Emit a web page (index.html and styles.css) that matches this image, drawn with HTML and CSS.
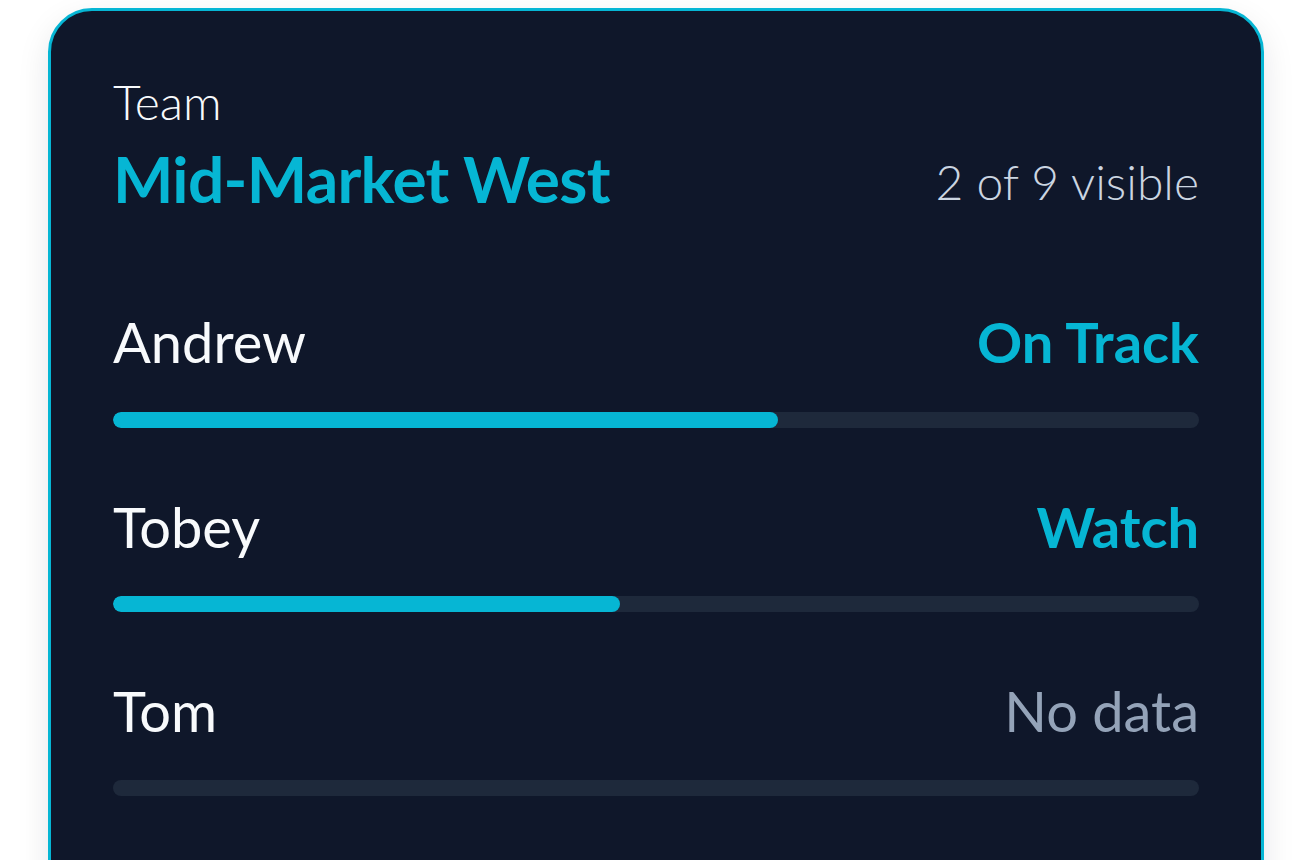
FILE: index.html
```html
<!DOCTYPE html>
<html>
	<head>
		<meta charset="UTF-8">
		<title>Team</title>
		<link rel="stylesheet" href="styles.css">
	</head>
	<body>
		<div class="page">
			<div class="card">
				<div class="head">
					<div class="label">Team</div>
					<div class="titleRow">
						<div class="title">Mid-Market West</div>
						<div class="count">2 of 9 visible</div>
					</div>
				</div>
				<div class="list">
					<div class="row">
						<div class="rowTop">
							<span class="name">Andrew</span>
							<span class="status on">On Track</span>
						</div>
						<div class="track"><div class="fill" style="width: 61.2%"></div></div>
					</div>
					<div class="row">
						<div class="rowTop">
							<span class="name">Tobey</span>
							<span class="status on">Watch</span>
						</div>
						<div class="track"><div class="fill" style="width: 46.7%"></div></div>
					</div>
					<div class="row">
						<div class="rowTop">
							<span class="name">Tom</span>
							<span class="status none">No data</span>
						</div>
						<div class="track"></div>
					</div>
				</div>
			</div>
		</div>
	</body>
</html>
```

FILE: styles.css
```css
*{
	margin: 0;
	padding: 0;
	box-sizing: border-box;
}
html,body{
	background: #fff;
	overflow: hidden;
}
body{
	font-family: Lato, "Noto Sans", sans-serif;
}
.page{
	padding: 8px 48px 0 48px;
}
.card{
	background: #0f172a;
	border: 3px solid #06b6d4;
	border-radius: 44px;
	padding: 62px 62px 140px 62px;
	box-shadow: 0 12px 32px rgba(15, 23, 42, 0.10);
}
.label{
	color: #f8fafc;
	font-size: 48px;
	line-height: 1.2;
	font-weight: 300;
}
.titleRow{
	display: flex;
	justify-content: space-between;
	align-items: center;
	margin-top: 10px;
}
.title{
	color: #06b6d4;
	font-size: 64px;
	line-height: 1.2;
	font-weight: 700;
	letter-spacing: -0.7px;
}
.count{
	color: #cbd5e1;
	font-size: 48px;
	line-height: 1.2;
	font-weight: 300;
	padding-top: 6px;
}
.list{
	display: flex;
	flex-direction: column;
	gap: 65px;
	margin-top: 91px;
}
.rowTop{
	display: flex;
	justify-content: space-between;
	align-items: baseline;
	font-size: 56px;
	line-height: 1.2;
}
.name{
	color: #f8fafc;
}
.status{
	font-weight: 700;
}
.status.on{
	color: #06b6d4;
}
.status.none{
	color: #94a3b8;
	font-weight: 400;
}
.track{
	margin-top: 36px;
	height: 16px;
	border-radius: 8px;
	background: #1e293b;
	overflow: hidden;
}
.fill{
	height: 100%;
	border-radius: 8px;
	background: #06b6d4;
}
```
